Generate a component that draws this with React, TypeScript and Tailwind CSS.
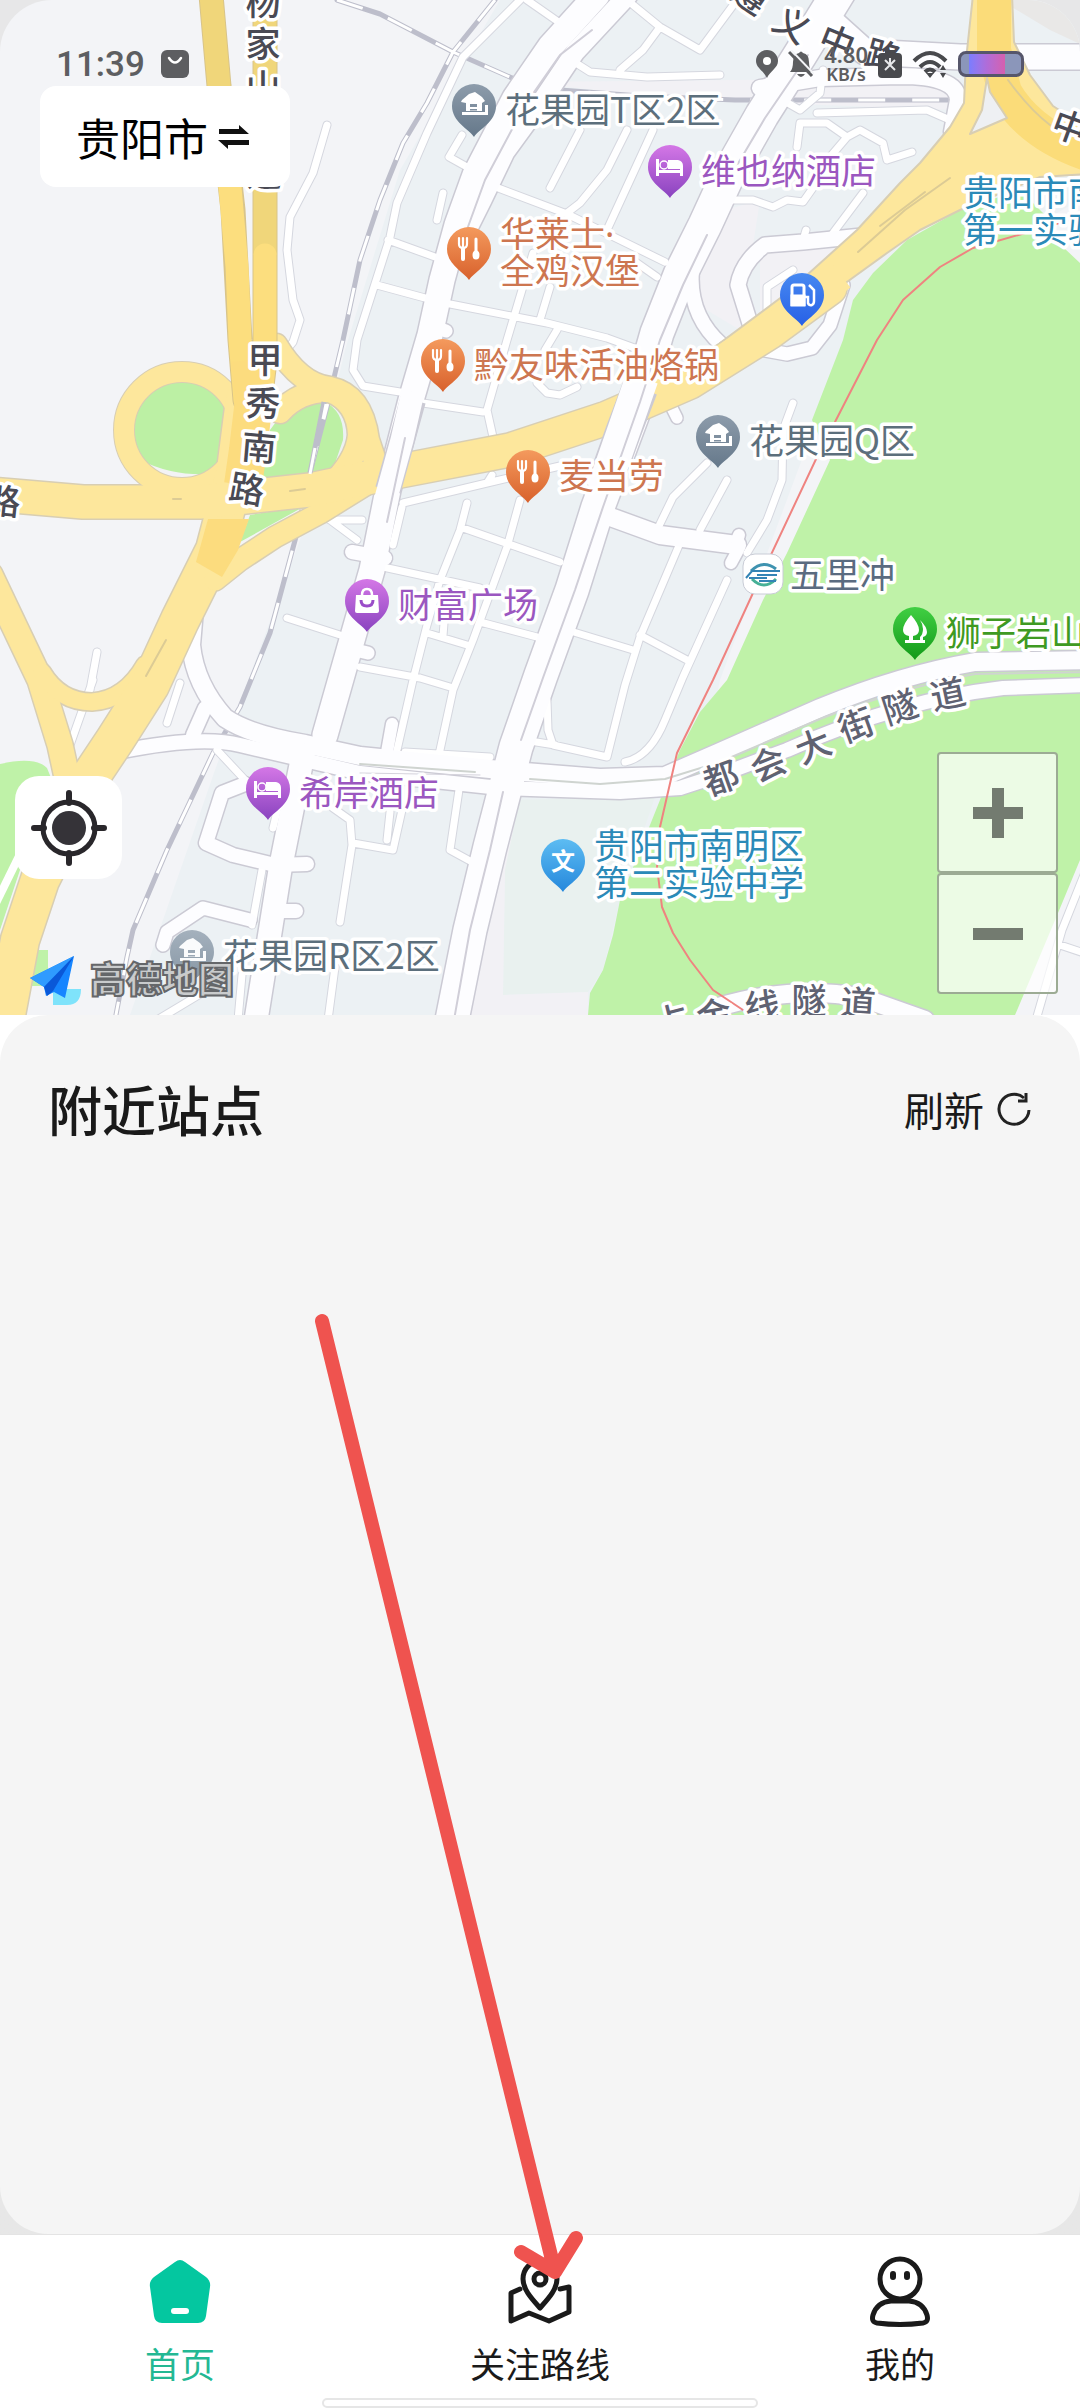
import type { ReactNode } from "react";

const CJK = "font-['Noto_Sans_CJK_SC',sans-serif]";

type Road = { d: string; w: number };

// White streets, grouped by class
const mainStreets: Road[] = [
  { d: "M597 -5 L550 47 L515 98 L475 175 L457 225 L442 280 L430 335 L411 400 L388 490 L372 570 L352 640 L325 735", w: 25 },
  { d: "M628 -5 L575 52 L540 104 L505 152 L482 200 L462 240", w: 19 },
  { d: "M840 -10 L800 55 L762 115 L728 175 L705 225 L680 275 L657 333 L638 400 L598 507 L572 590 L541 675 L516 747 L490 847 L470 930 L452 1020", w: 33 },
  { d: "M835 25 L865 52 L960 57 L1090 57", w: 25 },
  { d: "M760 88 L820 78 L900 76 Q958 76 958 100 L952 132", w: 16 },
  { d: "M195 598 L191 645 Q195 685 225 718 Q250 735 305 744 L360 756 L500 770 L600 778 L665 776 L720 752 L820 708 Q900 675 975 662 L1090 660", w: 18 },
  { d: "M118 752 Q200 735 240 745 L360 773 L500 788 L620 792 L680 788 L720 775 L787 750 Q900 700 1003 688 L1090 685", w: 14 },
  { d: "M710 210 L692 270 Q688 315 722 345", w: 14 },
  { d: "M862 236 L803 242 L765 245 Q742 262 738 285 L752 330", w: 15 },
  { d: "M843 285 L830 325 L812 348 L787 354 L765 350", w: 13 },
  { d: "M605 515 L660 535 L737 545", w: 18 },
  { d: "M737 540 L739 535 M738 550 L731 563", w: 12 },
  { d: "M303 755 L280 870 L256 1020", w: 23 },
  { d: "M245 784 L222 793 L206 843 L233 855 L275 865 L307 864", w: 14 },
  { d: "M163 945 L167 932 L203 908 L250 920", w: 13 },
  { d: "M283 911 L296 911", w: 14 },
  { d: "M205 708 L193 735", w: 14 },
  { d: "M392 724 L387 752", w: 12 },
  { d: "M672 408 L677 418", w: 11 },
  { d: "M355 650 L368 653", w: 13 },
  { d: "M438 328 L446 331", w: 13 },
  { d: "M352 552 L385 558", w: 14 },
  { d: "M715 1008 Q790 985 860 997 L925 1020", w: 18 },
];

const lanes =
  "M520 0 L463 57 L427 133 L397 203 L390 237 L357 340 L353 370 L363 386 L400 392 M527 0 L560 23 M462 135 L449 157 L467 167 " +
  "M443 193 L437 220 M388 240 L435 257 M377 285 L425 298 M485 183 L567 214 L665 262 M580 130 L550 188 " +
  "M627 130 L607 170 L580 203 L567 213 M653 130 L607 230 M627 256 L657 277 M445 303 L547 323 L607 338 L640 350 " +
  "M533 253 L507 340 L487 410 L493 437 M550 287 L540 320 M423 403 L483 412 M537 383 L547 393 L560 395 L577 387 M557 330 L545 350 " +
  "M568 58 L590 72 L647 77 L720 75 M660 27 L643 50 L620 70 M627 0 L660 27 L700 50 L737 0 " +
  "M823 70 L820 93 L800 110 L777 97 M817 113 L927 110 L950 120 M797 147 L800 123 L827 123 L847 137 L830 157 " +
  "M847 137 L860 130 L883 143 L887 160 L912 152 M730 200 L753 200 L773 207 L787 200 L803 202 L815 185 M863 193 L830 237 " +
  "M767 310 L767 287 L793 270 M803 240 L806 230 " +
  "M327 125 L313 173 L290 217 L287 250 L293 300 L300 320 L293 342 L285 352 " +
  "M463 528 L560 562 M467 503 L460 530 L440 580 L427 625 L413 680 L397 750 M520 500 L507 547 L473 640 L453 690 L440 750 " +
  "M383 567 L480 588 M480 622 L537 637 M427 633 L467 645 M360 667 L420 678 L450 687 M403 503 L487 483 L560 466 " +
  "M445 610 L443 636 M402 507 L393 545 M487 483 L492 475 M680 543 L640 637 L625 685 L607 757 M567 630 L633 650 M640 635 L687 660 " +
  "M727 580 L683 677 L665 720 Q650 757 625 762 M707 463 L673 497 L657 530 M727 480 L700 530 " +
  "M793 403 L783 430 L782 480 L767 520 L747 553 M547 700 L548 730 L553 745 L607 757 M530 741 L555 745 " +
  "M97 652 L90 690 M180 683 L167 723 M93 680 L70 745 M287 618 L340 635 M330 520 L357 540 M330 520 L362 520 " +
  "M262 870 L252 925 M279 803 L273 828 M333 808 L350 820 L352 845 L340 922 M353 843 L393 850 L402 810 M390 812 L387 840 " +
  "M460 783 L450 850 L472 862 M405 752 L490 757 M157 1020 L207 990 M242 975 L238 1020 M335 967 L328 1020 M217 750 L245 780 " +
  "M1090 860 L1062 930 L1036 1020 M1060 945 L1090 955";

const railways =
  "M337 0 L380 14 L453 52 L512 78 L560 90 L640 96 L735 100 L1000 100 " +
  "M495 0 L453 52 L427 103 L403 143 L380 200 L360 260 L343 340 L327 407 L310 473 L297 533 L270 633 L240 707 L213 753 L167 850 L133 930 L127 957 L115 1020";

// Elevated highways
const highways: Road[] = [
  { d: "M-10 575 L40 680 L60 745 L72 800", w: 25 },
  { d: "M42 672 Q60 702 92 702 Q125 700 145 665", w: 17 },
  { d: "M245 400 L236 470 L215 550 L180 620 L150 685 L115 740 L85 785 L65 830 L40 880 L20 940 L5 1020", w: 38 },
  { d: "M370 482 L320 513 L275 537 L240 560 L215 580", w: 21 },
  { d: "M276 345 Q300 385 330 388 Q362 395 368 440 L378 470 M280 412 Q300 390 330 391 Q358 402 359 435 Q357 460 330 486", w: 22 },
  { d: "M-10 494 L83 502 L200 502 L310 490 L395 472 L510 450 L607 418 L690 382 L770 332 L830 288", w: 33 },
];

const POI = {
  gray: ["#8d9cab", "#65788a", "#5c6f7c"],
  purple: ["#d477e6", "#8943bf", "#9b57c0"],
  orange: ["#f49a5d", "#d8612c", "#cd7650"],
  blue: ["#5dbcf2", "#2588dc", "#2b8ab8"],
  fuel: ["#4789f1", "#2760e6", "#2760e6"],
  green: ["#41cf43", "#139a19", "#3f9a22"],
};
type Tone = keyof typeof POI;

const glyphs: Record<string, ReactNode> = {
  home: (
    <g fill="#fff">
      <path d="M-12 -6 L-5 -12 L1 -14 L8 -9 L11 -5 L8 -3 L8 5 L-8 5 L-8 -3 L-13 -4 Z" />
      <path d="M-12 6 L14 6 L14 9 L-12 9 Z M11 -1 h3 v8 h-3 z" />
      <path d="M-4 -2 h7 v3 h-7 z M-4 3 h7 v1.5 h-7 z" fill="#8090a0" />
    </g>
  ),
  bed: (
    <g fill="#fff">
      <path d="M-14 -8 h3 v11 h21 v-1 h3 v7 h-3 v-3 h-21 v3 h-3 z" />
      <path d="M-2 -7 h10 q5 1 5 6 v3 h-15 z" />
      <circle cx="-6" cy="-2" r="4" fill="none" stroke="#fff" strokeWidth="1.5" />
    </g>
  ),
  food: (
    <g fill="none" stroke="#fff" strokeLinecap="round">
      <path d="M-10 -11 v6 q0 4 4 4 q4 0 4 -4 v-6 M-6 -11 v8" strokeWidth="2.2" />
      <path d="M-6 -1 v11" strokeWidth="4" />
      <path d="M7 -10 v12" strokeWidth="3" />
      <ellipse cx="7" cy="6" rx="3.5" ry="4.5" fill="#fff" stroke="none" />
    </g>
  ),
  bag: (
    <g>
      <path d="M-11 -6 h22 l1 16 q0 2 -2 2 h-20 q-2 0 -2 -2 z" fill="#fff" />
      <path d="M-5 -6 q0 -6 5 -6 q5 0 5 6" fill="none" stroke="#fff" strokeWidth="2.5" />
      <path d="M-6 -1 q0 6 6 6 q6 0 6 -6" fill="none" stroke="#9a4dc8" strokeWidth="3" />
    </g>
  ),
  fuel: (
    <g fill="none" stroke="#fff" strokeWidth="3">
      <path d="M-10 11 V-8 q0 -2 2 -2 h8 q2 0 2 2 V11" />
      <path d="M-10 1 h12 v9 h-12 z" fill="#fff" />
      <path d="M2 2 h4 v6 q1 3 4 2 q2 -1 2 -4 V-5 l-5 -5" strokeWidth="2.5" />
    </g>
  ),
  tree: (
    <g fill="#fff">
      <path d="M-4 -14 q8 9 8 15 q0 5 -6 6 v4 h-4 v-4 q-6 -1 -6 -6 q0 -6 8 -15 z" />
      <path d="M5 -9 q7 7 7 12 q0 4 -4 5 v3 h-3 v-3 q3 -3 3 -8 q0 -5 -3 -9 z" />
      <path d="M-10 11 h20 v3 h-20 z" />
    </g>
  ),
};

type Poi = { x: number; y: number; tone: Tone; icon: string; lines: ReactNode[]; faded?: boolean };
const pois: Poi[] = [
  { x: 474, y: 106, tone: "gray", icon: "home", lines: ["花果园T区2区"] },
  { x: 670, y: 167, tone: "purple", icon: "bed", lines: ["维也纳酒店"] },
  {
    x: 469,
    y: 249,
    tone: "orange",
    icon: "food",
    lines: [
      <>
        华莱士<tspan className="font-['Noto_Sans',sans-serif]">·</tspan>
      </>,
      "全鸡汉堡",
    ],
  },
  { x: 802, y: 295, tone: "fuel", icon: "fuel", lines: [] },
  { x: 443, y: 361, tone: "orange", icon: "food", lines: ["黔友味活油烙锅"] },
  { x: 718, y: 437, tone: "gray", icon: "home", lines: ["花果园Q区"] },
  { x: 528, y: 472, tone: "orange", icon: "food", lines: ["麦当劳"] },
  { x: 367, y: 601, tone: "purple", icon: "bag", lines: ["财富广场"] },
  { x: 915, y: 629, tone: "green", icon: "tree", lines: ["狮子岩山"] },
  { x: 268, y: 789, tone: "purple", icon: "bed", lines: ["希岸酒店"] },
  { x: 563, y: 861, tone: "blue", icon: "school", lines: ["贵阳市南明区", "第二实验中学"] },
  { x: 192, y: 952, tone: "gray", icon: "home", lines: ["花果园R区2区"], faded: true },
];

// Road names run one character at a time: [char, centre x, centre y, angle]
const roadNames: [string, number, number, number][] = [
  ["杨", 263, 2, 0], ["家", 263, 44, 0], ["山", 263, 87, 0], ["隧", 263, 129, 0], ["道", 264, 173, 0],
  ["甲", 265, 360, 0], ["秀", 263, 403, 2], ["南", 259, 447, 5], ["路", 247, 489, 10], ["路", 3, 501, 6],
  ["遵", 750, -4, 35], ["义", 792, 25, 30], ["中", 837, 42, 22], ["路", 883, 56, 15], ["中", 1070, 127, 20],
  ["都", 721, 778, -20], ["会", 768, 764, -22], ["大", 813, 746, -22], ["街", 856, 725, -20], ["隧", 900, 707, -18], ["道", 948, 694, -12],
  ["占", 671, 1021, -14], ["金", 714, 1015, -10], ["线", 762, 1006, -5], ["隧", 809, 1001, 0], ["道", 858, 1003, 4],
];

const halo = { stroke: "#fff", strokeWidth: 7, strokeLinejoin: "round", paintOrder: "stroke" } as const;

function Pin({ poi }: { poi: Poi }) {
  const color = POI[poi.tone][2];
  const first = poi.lines.length > 1 ? -2 : 17;
  return (
    <g transform={`translate(${poi.x} ${poi.y})`}>
      <g opacity={poi.faded ? 0.75 : 1}>
        <path d="M0 31 C-5 23 -22 16 -22 0 A22 22 0 0 1 22 0 C22 16 5 23 0 31 Z" fill={`url(#pin-${poi.tone})`} />
        {poi.icon === "school" ? (
          <text x="0" y="9" fontSize="24" fontWeight="700" textAnchor="middle" fill="#fff">文</text>
        ) : (
          glyphs[poi.icon]
        )}
      </g>
      {poi.lines.map((line, i) => (
        <text key={i} x="31" y={first + i * 37} fontSize="35" fill={color} {...halo}>
          {line}
        </text>
      ))}
    </g>
  );
}

function CityMap() {
  return (
    <svg viewBox="0 0 1080 1015" className={`block w-full ${CJK}`} role="img" aria-label="地图">
      <defs>
        {(Object.keys(POI) as Tone[]).map((tone) => (
          <linearGradient key={tone} id={`pin-${tone}`} x1="0" y1="0" x2="0" y2="1">
            <stop offset="0" stopColor={POI[tone][0]} />
            <stop offset="1" stopColor={POI[tone][1]} />
          </linearGradient>
        ))}
      </defs>
      <rect width="1080" height="1015" fill="#f3f4f7" />

      {/* Built-up blocks */}
      <path d="M500 0 L1080 0 L1080 200 L850 330 L720 680 L650 1015 L130 1015 L215 770 L300 540 L345 350 L400 170 Z" fill="#ecf1f4" />
      <path d="M1000 0 L1080 0 L1080 44 L1050 30 Z" fill="#e9e8e7" />
      <path d="M520 82 L960 78 L955 110 L690 100 Z M760 250 L850 240 L800 330 L760 330 Z M690 220 L760 200 L740 330 L690 300 Z" fill="#f2f1f5" />
      <path d="M505 800 L655 797 L620 900 L603 970 L588 992 L503 995 L505 870 Z" fill="#e9f1ef" />
      <path d="M490 810 L520 797 L505 870 L503 995 L588 992 L588 1020 L470 1020 Z" fill="#f2f1f5" />

      {/* Parks */}
      <path
        d="M843 340 L853 300 L873 273 L907 240 L960 210 L1020 190 L1045 215 L1063 247 L1080 263 L1080 860 L1058 913 L1015 1015 L588 1015 L590 993 L603 970 L613 935 L620 900 L650 825 L680 750 L700 712 L727 680 L763 600 L787 553 L830 460 L812 420 Z"
        fill="#bff2a8"
      />
      <path d="M0 764 Q35 756 47 768 L60 800 L20 870 L0 930 Z M26 950 h22 v36 h-22 z" fill="#bff2a8" />
      <path d="M22 850 L-5 905" stroke="#fff" strokeWidth="8" />
      <circle cx="182" cy="430" r="50" fill="#bcf0a4" />
      <path d="M270 430 Q290 400 325 402 Q345 412 343 440 L330 478 L260 486 Z M250 515 L305 506 L240 542 Z" fill="#bcf0a4" />
      <path d="M140 460 Q180 480 228 472 L225 486 L170 486 Z" fill="#f3f3f5" />

      {/* Streets: casing below, surface above */}
      <g fill="none" strokeLinecap="round" strokeLinejoin="round">
        <path d={railways} stroke="#bdbecb" strokeWidth="5" />
        <path d={railways} stroke="#fff" strokeWidth="3" strokeDasharray="27 27" strokeLinecap="butt" />
        <path d={lanes} stroke="#d5d7df" strokeWidth="9" />
        {mainStreets.map((r) => (
          <path key={r.d} d={r.d} stroke="#cbcad4" strokeWidth={r.w + 3} />
        ))}
        <path d={lanes} stroke="#fff" strokeWidth="7" />
        {mainStreets.map((r) => (
          <path key={r.d} d={r.d} stroke="#fdfdff" strokeWidth={r.w} />
        ))}
        <path d="M360 764 L475 772 M530 779 L600 784 L665 779 L720 762 L820 719 Q900 688 975 674 L1090 672" stroke="#cfd4d0" strokeWidth="2" />
        <path d="M360 773 L480 775" stroke="#d5d3dc" strokeWidth="1" />

        {/* Highways */}
        <g stroke="#d8ceb3">
          <circle cx="182" cy="430" r="58" strokeWidth="22" />
          {highways.map((r) => (
            <path key={r.d} d={r.d} strokeWidth={r.w + 3} />
          ))}
        </g>
        <path
          d="M720 343 L787 293 L857 230 L900 183 L920 163 L950 127 L964 103 L966 60 L973 -5 L1012 -5 L1014 42 L1030 75 L1053 106 L1090 130 L1090 174 L1040 177 L960 210 L920 230 L887 253 L840 287 L720 368 Z"
          fill="#fde79c" stroke="#d8ceb3" strokeWidth="2"
        />
        <g stroke="#fde79c">
          <circle cx="182" cy="430" r="58" strokeWidth="20" />
          {highways.map((r) => (
            <path key={r.d} d={r.d} strokeWidth={r.w} />
          ))}
          <path d="M800 305 L840 274" strokeWidth="34" strokeLinecap="butt" />
        </g>
        <path d="M211 -5 L219 86 L233 210 L240 340 L245 400 M265 -5 L265 360 L258 420" stroke="#d8c48a" strokeWidth="25" />
        <path d="M211 -5 L219 86 L230 187 M265 -5 L265 255" stroke="#f0d67a" strokeWidth="23" strokeLinecap="butt" />
        <path d="M230 187 L237 267 L240 340 L245 400 M265 255 L265 360 L258 420" stroke="#fcde7e" strokeWidth="23" />
        <path d="M250 360 L254 400 L248 450 L243 485" stroke="#fcdc7e" strokeWidth="38" strokeLinecap="butt" />
        <path d="M208 519 L249 519 L238 550 L222 577 L196 562 Z" fill="#fcdc7e" />
        <path d="M994 -5 L994 50 L1005 92 Q1030 135 1090 155" stroke="#fbdc79" strokeWidth="34" strokeLinecap="butt" />
        <path d="M987 78 L990 92 L1007 118 L970 134 L982 110 Z" fill="#eef0f3" stroke="#d8ceb3" strokeWidth="2" />
        <path d="M1008 80 Q1030 110 1050 125 M858 252 L905 210 L950 178 M880 226 L925 192 M173 499 h8 M290 491 l15 -2 M166 640 L146 676" stroke="#dccb95" strokeWidth="2" />

        {/* Streets that cross over the expressway */}
        <path d="M413 400 L402 440 L388 490" stroke="#cbcad4" strokeWidth="26" strokeLinecap="butt" />
        <path d="M413 392 L402 440 L386 498" stroke="#fdfdff" strokeWidth="23" strokeLinecap="butt" />
        <path d="M640 388 L624 430 L606 480" stroke="#cbcad4" strokeWidth="36" strokeLinecap="butt" />
        <path d="M642 378 L624 430 L603 490" stroke="#fdfdff" strokeWidth="33" strokeLinecap="butt" />
        <path d="M405 438 L387 522 M808 55 L765 118 L733 172 M707 235 L683 285 L660 340 L640 402 L603 507 L575 590 L544 675 L521 740 M503 792 L490 850 L470 930 L454 1020" stroke="#d0ced8" strokeWidth="2" />
        <path d="M592 30 L560 55 L525 105 L485 180 L465 235" stroke="#d0ced8" strokeWidth="2" />
        <path d="M324 402 L310 473" stroke="#bdbecb" strokeWidth="5" strokeLinecap="butt" />
        <path d="M326 404 L323 419 M315 448 L310 474" stroke="#fff" strokeWidth="3" strokeLinecap="butt" />

        {/* Metro line */}
        <path
          d="M1070 220 L973 248 L940 267 L903 300 L877 340 L835 422 L817 457 L753 593 L713 680 L677 753 L660 827 L657 867 L662 907 L673 933 L690 960 L713 990 L743 1010"
          stroke="#ef8380" strokeWidth="2"
        />
      </g>

      {roadNames.map(([char, x, y, angle], i) => (
        <text key={i} transform={`translate(${x} ${y}) rotate(${angle})`} y="13" fontSize="35" fontWeight="500" textAnchor="middle" fill={i < 15 ? "#4a4a54" : "#5f6272"} {...halo}>
          {char}
        </text>
      ))}

      {pois.map((poi) => (
        <Pin key={poi.x} poi={poi} />
      ))}

      <g fill="#2b8ab8" fontSize="35">
        <text x="963" y="206" {...halo}>贵阳市南</text>
        <text x="963" y="243" {...halo}>第一实验</text>
      </g>

      {/* Metro station */}
      <g transform="translate(743 554)">
        <rect width="40" height="40" rx="12" fill="#fff" stroke="#c9ccd6" />
        <g fill="none" strokeWidth="3">
          <path d="M8 17 Q20 5 33 15" stroke="#3f93b0" />
          <path d="M9 25 Q21 37 33 25" stroke="#46b096" />
          <path d="M3 24 L9 17 H37 M14 21 H34 M6 24 H24 M16 27 H33" stroke="#3484b5" strokeWidth="2" />
        </g>
      </g>
      <text x="790" y="588" fontSize="35" fill="#5a6b80" {...halo}>五里冲</text>
    </svg>
  );
}

function StatusBar() {
  return (
    <div className="absolute inset-x-0 top-0 flex h-32 items-center justify-between px-14 text-[#5d5e61]">
      <div className="flex items-center gap-4">
        <span className="font-['Roboto',sans-serif] text-[35px] leading-none font-medium">11:39</span>
        <svg width="28" height="28" viewBox="0 0 28 28">
          <rect width="28" height="28" rx="6" fill="currentColor" />
          <path d="M8 8 Q14 17 20 8" fill="none" stroke="#fff" strokeWidth="2.5" strokeLinecap="round" />
        </svg>
      </div>
      <div className="flex items-center gap-2.5">
        <svg width="22" height="28" viewBox="0 0 22 28">
          <path d="M11 28 C8 21 0 18 0 11 A11 11 0 0 1 22 11 C22 18 14 21 11 28 Z" fill="currentColor" />
          <circle cx="11" cy="11" r="4" fill="#fff" />
        </svg>
        <svg width="26" height="28" viewBox="0 0 26 28">
          <path d="M2 22 Q5 19 5 12 Q5 4 11 3 Q13 0 15 3 Q21 4 21 12 Q21 19 24 22 Z M9 24 h8 q-4 6 -8 0 z" fill="currentColor" />
          <path d="M3 0 L26 24" stroke="#f4f5f8" strokeWidth="2" />
          <path d="M1 2 L24 26" stroke="currentColor" strokeWidth="3" />
        </svg>
        <div className="text-center font-['Noto_Sans',sans-serif] font-semibold">
          <div className="text-[22px] leading-5">4.80</div>
          <div className="text-[18px] leading-5">KB/s</div>
        </div>
        <svg width="24" height="28" viewBox="0 0 24 28">
          <path d="M7 0 h10 v3 h3 q4 0 4 4 v17 q0 4 -4 4 h-16 q-4 0 -4 -4 v-17 q0 -4 4 -4 h3 z" fill="#48494d" />
          <path d="M7 10 L17 20 M17 10 L12 15 L7 20 M12 8 v6" stroke="#e7e8ea" strokeWidth="2" />
        </svg>
        <svg width="36" height="28" viewBox="0 0 36 28" fill="none" stroke="#48494d" strokeWidth="4">
          <path d="M2 11 Q18 -5 34 11 M8 17 Q18 7 28 17 M13 22 Q18 17 23 22" />
          <path d="M14 23 L18 28 L22 23 Z" fill="#48494d" stroke="none" />
          <path d="M31 15 l3 5 h-6 z M31 28 l3 -5 h-6 z" fill="#48494d" stroke="none" />
        </svg>
        <div className="flex h-[26px] w-[66px] rounded-lg border-[3px] border-[#56566b] bg-[#8b96ba] pl-2">
          <div className="h-full w-9 bg-linear-to-r from-[#7a7dff] via-[#b06cd8] to-[#d65fae]" />
        </div>
      </div>
    </div>
  );
}

function MapLogo() {
  return (
    <div className="absolute bottom-2 left-6 flex items-start gap-1.5">
      <svg width="60" height="54" viewBox="0 0 60 54">
        <path d="M29 36 h28 q0 16 -14 16 h-14 z" fill="#7fe3fb" />
        <path d="M6 25 L50 3 L41 45 L30 39 L22 43 L20 34 Z" fill="#1685ff" />
        <path d="M6 25 L50 3 L20 34 Z" fill="#2f9bff" />
        <path d="M50 3 L20 34 L23 43 L29 38 Z" fill="#0a58d8" />
      </svg>
      <span className={`${CJK} text-[36px] leading-[48px] font-black text-[#c9cbcc] [-webkit-text-stroke:2px_#65676a]`}>高德地图</span>
    </div>
  );
}

function HomeIcon() {
  return (
    <svg width="62" height="72" viewBox="0 0 62 72">
      <path d="M26 6 Q31 2 36 6 L57 21 Q62 25 61 31 L57 60 Q56 67 49 67 H13 Q6 67 5 60 L1 31 Q0 25 5 21 Z" fill="#04c7a0" />
      <rect x="22" y="52" width="18" height="6" rx="3" fill="#fff" />
    </svg>
  );
}

function RouteIcon() {
  return (
    <svg width="64" height="72" viewBox="0 0 64 72" fill="none" stroke="#1a1a1a" strokeWidth="5" strokeLinecap="round" strokeLinejoin="round">
      <path d="M32 52 C25 44 15 34 15 23 A17 18 0 0 1 49 23 C49 34 39 44 32 52 Z" />
      <circle cx="32" cy="23" r="6" />
      <path d="M12 33 L3 37 V65 L21 57 L41 65 L61 56 V31 L52 33" />
    </svg>
  );
}

function UserIcon() {
  return (
    <svg width="62" height="72" viewBox="0 0 62 72" fill="none" stroke="#1a1a1a" strokeWidth="5">
      <circle cx="31" cy="23" r="20" />
      <path d="M22 45 H40 Q54 46 58 59 Q60 66 54 67 Q31 70 8 67 Q2 66 4 59 Q8 46 22 45 Z" />
      <path d="M24 18 v3 M38 18 v3" strokeWidth="6" strokeLinecap="round" />
    </svg>
  );
}

const tabs = [
  { label: "首页", icon: <HomeIcon />, active: true },
  { label: "关注路线", icon: <RouteIcon />, active: false },
  { label: "我的", icon: <UserIcon />, active: false },
];

export default function App() {
  return (
    <div className={`relative flex min-h-screen flex-col bg-white text-[#1a1a1a] ${CJK}`}>
      <div className="bg-[#e7e7e8]">
        <header className="relative overflow-hidden rounded-t-[52px]">
          <CityMap />
          <StatusBar />

          <button type="button" className="absolute top-[86px] left-10 flex h-[101px] items-center gap-2.5 rounded-2xl bg-white pr-10 pl-9 text-[44px] leading-none text-black">
            贵阳市
            <svg width="32" height="24" viewBox="0 0 32 24" fill="#111">
              <path d="M1 4 H21 V0 L31 9 H1 Z" />
              <path d="M31 20 H10 V24 L0 15 H31 Z" />
            </svg>
          </button>

          <button type="button" aria-label="定位" className="absolute bottom-[136px] left-[15px] flex h-[103px] w-[107px] items-center justify-center rounded-3xl bg-white">
            <svg width="76" height="76" viewBox="0 0 76 76" fill="none" stroke="#29272b" strokeLinecap="round">
              <circle cx="38" cy="38" r="26" strokeWidth="5" />
              <circle cx="38" cy="38" r="17" fill="#353338" stroke="none" />
              <path d="M38 3 V13 M38 63 V73 M3 38 H13 M63 38 H73" strokeWidth="6" />
            </svg>
          </button>

          <div className="absolute right-[22px] bottom-[21px] flex flex-col">
            <button type="button" aria-label="放大" className="flex size-[121px] items-center justify-center rounded border-2 border-[#9cab94] bg-white/70">
              <svg width="50" height="50" viewBox="0 0 50 50" stroke="#737b70" strokeWidth="12">
                <path d="M25 0 V50 M0 25 H50" />
              </svg>
            </button>
            <button type="button" aria-label="缩小" className="flex size-[121px] items-center justify-center rounded border-2 border-[#9cab94] bg-white/70">
              <svg width="50" height="50" viewBox="0 0 50 50" stroke="#737b70" strokeWidth="12">
                <path d="M0 25 H50" />
              </svg>
            </button>
          </div>

          <MapLogo />
        </header>
      </div>

      <main className="flex flex-1 flex-col bg-linear-to-b from-white from-50% to-[#e7e7e7] to-50%">
        <section className="flex-1 rounded-[48px] bg-[#f5f5f5] px-12 pt-[54px]">
          <div className="flex items-center justify-between">
            <h1 className="text-[54px] leading-[80px] font-medium">附近站点</h1>
            <button type="button" className="flex items-center gap-3 text-[40px] leading-none">
              刷新
              <svg width="36" height="36" viewBox="0 0 36 36" fill="none" stroke="#222" strokeWidth="3">
                <path d="M33 19 A15 15 0 1 1 28 7" />
                <path d="M30 2 V10 H22" />
              </svg>
            </button>
          </div>
        </section>
      </main>

      <nav className="relative grid h-[174px] grid-cols-3 border-t border-[#e4e4e4] bg-white">
        {tabs.map((tab) => (
          <a key={tab.label} href="#" className={`flex flex-col items-center gap-2.5 pt-[21px] text-[35px] leading-[50px] ${tab.active ? "text-[#23b893]" : "text-[#1a1a1a]"}`}>
            {tab.icon}
            {tab.label}
          </a>
        ))}
        <div className="absolute bottom-0 left-1/2 h-2.5 w-[436px] -translate-x-1/2 rounded-full border-2 border-[#e6e6e6] bg-white" />
      </nav>

      {/* Guide arrow pointing at the routes tab */}
      <svg viewBox="0 0 1080 2408" className="pointer-events-none absolute inset-0 size-full" fill="none" stroke="#ef534f" strokeLinecap="round" strokeLinejoin="round">
        <path d="M322 1321 L555 2272 M521 2252 L555 2272 L576 2238" strokeWidth="14" />
      </svg>
    </div>
  );
}
